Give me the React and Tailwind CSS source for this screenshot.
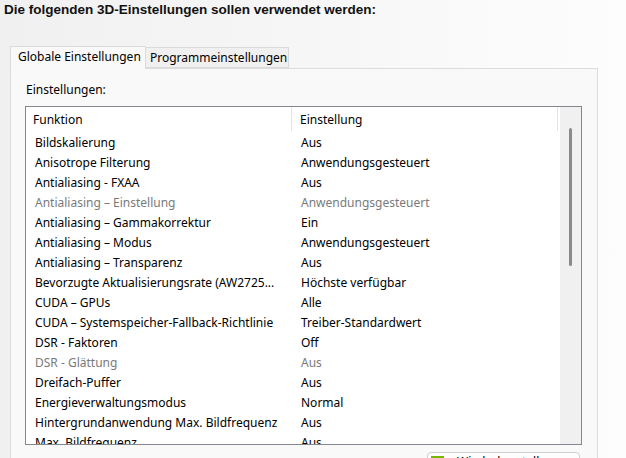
const rows = [
  ['Bildskalierung', 'Aus'],
  ['Anisotrope Filterung', 'Anwendungsgesteuert'],
  ['Antialiasing - FXAA', 'Aus'],
  ['Antialiasing – Einstellung', 'Anwendungsgesteuert', true],
  ['Antialiasing – Gammakorrektur', 'Ein'],
  ['Antialiasing – Modus', 'Anwendungsgesteuert'],
  ['Antialiasing – Transparenz', 'Aus'],
  ['Bevorzugte Aktualisierungsrate (AW2725...', 'Höchste verfügbar'],
  ['CUDA – GPUs', 'Alle'],
  ['CUDA – Systemspeicher-Fallback-Richtlinie', 'Treiber-Standardwert'],
  ['DSR - Faktoren', 'Off'],
  ['DSR - Glättung', 'Aus', true],
  ['Dreifach-Puffer', 'Aus'],
  ['Energieverwaltungsmodus', 'Normal'],
  ['Hintergrundanwendung Max. Bildfrequenz', 'Aus'],
  ['Max. Bildfrequenz', 'Aus'],
]

export default function App() {
  return (
    <div className="h-[458px] w-[626px] overflow-hidden bg-gradient-to-r from-[#f0f0f0] to-[#fdfdfd] font-['Noto_Sans',sans-serif] text-[12px] text-[#000]">
      <div className="pl-[4px] pt-[2px] font-['Liberation_Sans',sans-serif] text-[13.5px] font-bold leading-[16px] text-[#111]">
        Die folgenden 3D-Einstellungen sollen verwendet werden:
      </div>

      <div className="mt-[28px] flex items-end pl-[10px]">
        <div className="relative z-10 -mb-px h-[23px] w-[136px] border border-b-0 border-[#dadada] bg-[#f9f9f9] pl-[7px] leading-[19px]">
          Globale Einstellungen
        </div>
        <div className="h-[21px] w-[143px] border border-l-0 border-[#dadada] bg-[#f0f0f0] pl-[4px] leading-[20px]">
          Programmeinstellungen
        </div>
      </div>

      <div className="ml-[10px] h-[400px] w-[588px] border border-[#dcdcdc] bg-[#f9f9f9]">
        <div className="pl-[15px] pt-[13px] leading-[16px]">Einstellungen:</div>

        <div className="ml-[14px] mt-[8px] flex h-[339px] w-[557px] overflow-hidden border border-[#828790] bg-white">
          <div className="flex w-[534px] flex-col">
            <div className="flex h-[26px] shrink-0 items-start">
              <div className="flex h-[24px] w-[266px] items-center border-r border-[#e5e5e5] pl-[7px] pt-[1px]">
                Funktion
              </div>
              <div className="flex h-[24px] w-[266px] items-center border-r border-[#e5e5e5] pl-[8px] pt-[1px]">
                Einstellung
              </div>
            </div>
            {rows.map(([name, value, dim]) => (
              <div
                key={name}
                className={`flex h-[20px] shrink-0 items-center ${dim ? 'text-[#7a7a7a]' : 'text-[#000]'}`}>
                <div className="w-[266px] whitespace-nowrap pl-[9px]">{name}</div>
                <div className="whitespace-nowrap pl-[9px]">{value}</div>
              </div>
            ))}
          </div>
          <div className="ml-auto flex w-[21px] justify-center bg-[#f0f0f0] pt-[21px]">
            <div className="h-[138px] w-[3px] rounded-full bg-[#8a8a8a]" />
          </div>
        </div>

        <div className="ml-[416px] mt-[7px] flex h-[26px] w-[153px] items-start gap-[13px] rounded-[4px] border border-[#d0d0d0] bg-[#fdfdfd] pl-[3px] pt-[3px]">
          <div className="h-[12px] w-[13px] bg-[#76b900]" />
          <span className="-mt-[3px]">Wiederherstellen</span>
        </div>
      </div>
    </div>
  )
}
